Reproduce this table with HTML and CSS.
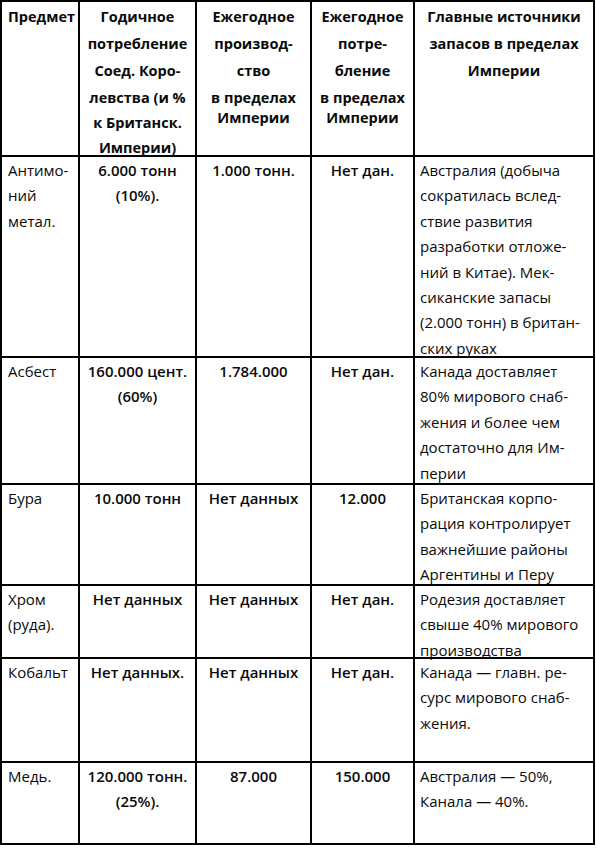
FILE: index.html
```html
<!DOCTYPE html>
<html lang="ru">
<head>
<meta charset="utf-8">
<title>Таблица</title>
<link rel="stylesheet" href="styles.css">
</head>
<body>
<table class="tbl">
  <colgroup>
    <col class="c1"><col class="c2"><col class="c3"><col class="c4"><col class="c5">
  </colgroup>
  <thead>
    <tr class="r-head">
      <th class="h-left"><div class="cell"><div class="hl">Предмет</div></div></th>
      <th>
        <div class="cell">
          <div class="hl">Годичное</div>
          <div class="hl">потребление</div>
          <div class="hl">Соед. Коро-</div>
          <div class="hl">левства (и %</div>
          <div class="hl-mid">
            <div>к Британск.</div>
            <div>Империи)</div>
          </div>
        </div>
      </th>
      <th>
        <div class="cell">
          <div class="hl">Ежегодное</div>
          <div class="hl">производ-</div>
          <div class="hl">ство</div>
          <div class="hl-tight">
            <div>в пределах</div>
            <div>Империи</div>
          </div>
        </div>
      </th>
      <th>
        <div class="cell">
          <div class="hl">Ежегодное</div>
          <div class="hl">потре-</div>
          <div class="hl">бление</div>
          <div class="hl-tight">
            <div>в пределах</div>
            <div>Империи</div>
          </div>
        </div>
      </th>
      <th>
        <div class="cell">
          <div class="hl">Главные источники</div>
          <div class="hl">запасов в пределах</div>
          <div class="hl">Империи</div>
        </div>
      </th>
    </tr>
  </thead>
  <tbody>
    <tr class="r1">
      <td class="name"><div class="cell">Антимо-<br>ний<br>метал.</div></td>
      <td class="num"><div class="cell">6.000 тонн<br>(10%).</div></td>
      <td class="num"><div class="cell">1.000 тонн.</div></td>
      <td class="num"><div class="cell">Нет дан.</div></td>
      <td class="src"><div class="cell">Австралия (добыча<br>сократилась вслед-<br>ствие развития<br>разработки отложе-<br>ний в Китае). Мек-<br>сиканские запасы<br>(2.000 тонн) в британ-<br>ских руках</div></td>
    </tr>
    <tr class="r2">
      <td class="name"><div class="cell">Асбест</div></td>
      <td class="num"><div class="cell">160.000 цент.<br>(60%)</div></td>
      <td class="num"><div class="cell">1.784.000</div></td>
      <td class="num"><div class="cell">Нет дан.</div></td>
      <td class="src"><div class="cell">Канада доставляет<br>80% мирового снаб-<br>жения и более чем<br>достаточно для Им-<br>перии</div></td>
    </tr>
    <tr class="r3">
      <td class="name"><div class="cell">Бура</div></td>
      <td class="num"><div class="cell">10.000 тонн</div></td>
      <td class="num"><div class="cell">Нет данных</div></td>
      <td class="num"><div class="cell">12.000</div></td>
      <td class="src"><div class="cell">Британская корпо-<br>рация контролирует<br>важнейшие районы<br>Аргентины и Перу</div></td>
    </tr>
    <tr class="r4">
      <td class="name"><div class="cell">Хром<br>(руда).</div></td>
      <td class="num"><div class="cell">Нет данных</div></td>
      <td class="num"><div class="cell">Нет данных</div></td>
      <td class="num"><div class="cell">Нет дан.</div></td>
      <td class="src"><div class="cell">Родезия доставляет<br>свыше 40% мирового<br>производства</div></td>
    </tr>
    <tr class="r5">
      <td class="name"><div class="cell">Кобальт</div></td>
      <td class="num"><div class="cell">Нет данных.</div></td>
      <td class="num"><div class="cell">Нет данных</div></td>
      <td class="num"><div class="cell">Нет дан.</div></td>
      <td class="src"><div class="cell">Канада — главн. ре-<br>сурс мирового снаб-<br>жения.</div></td>
    </tr>
    <tr class="r6">
      <td class="name"><div class="cell">Медь.</div></td>
      <td class="num"><div class="cell">120.000 тонн.<br>(25%).</div></td>
      <td class="num"><div class="cell">87.000</div></td>
      <td class="num"><div class="cell">150.000</div></td>
      <td class="src"><div class="cell">Австралия — 50%,<br>Канала — 40%.</div></td>
    </tr>
  </tbody>
</table>
</body>
</html>
```

FILE: styles.css
```css
html, body {
  margin: 0;
  padding: 0;
  background: #fff;
}

body {
  font-family: "Open Sans", "Noto Sans", "DejaVu Sans", sans-serif;
  font-size: 15px;
  color: #0a0a0a;
}

.tbl {
  border-collapse: collapse;
  table-layout: fixed;
  width: 595px;
  margin: 0;
}

.c1 { width: 78px; }
.c2 { width: 117px; }
.c3 { width: 115px; }
.c4 { width: 103px; }
.c5 { width: 180px; }

.tbl th,
.tbl td {
  border: 2px solid #000;
  vertical-align: top;
  white-space: nowrap;
  overflow: visible;
}

.cell {
  margin-bottom: -10px;
}

.tbl th {
  font-weight: 700;
  font-size: 14.5px;
  text-align: center;
  padding: 1px 3px 0;
}

.tbl th.h-left {
  text-align: left;
  padding-left: 6px;
}

.hl {
  line-height: 27px;
}

.hl-mid {
  line-height: 24.5px;
}

.hl-tight {
  line-height: 20px;
  margin-top: 4px;
}

.tbl td {
  line-height: 25.4px;
  padding: 1px 4px 0 6px;
}

.tbl td.name {
  text-align: left;
  font-weight: 500;
}

.tbl td.num {
  text-align: center;
  font-weight: 600;
  padding-left: 3px;
  padding-right: 3px;
}

.tbl td.src {
  text-align: left;
  font-weight: 500;
  padding-left: 5px;
}

.r-head { height: 155px; }
.r1 { height: 201px; }
.r2 { height: 127px; }
.r3 { height: 101px; }
.r4 { height: 73px; }
.r5 { height: 104px; }
.r6 { height: 82px; }
```
